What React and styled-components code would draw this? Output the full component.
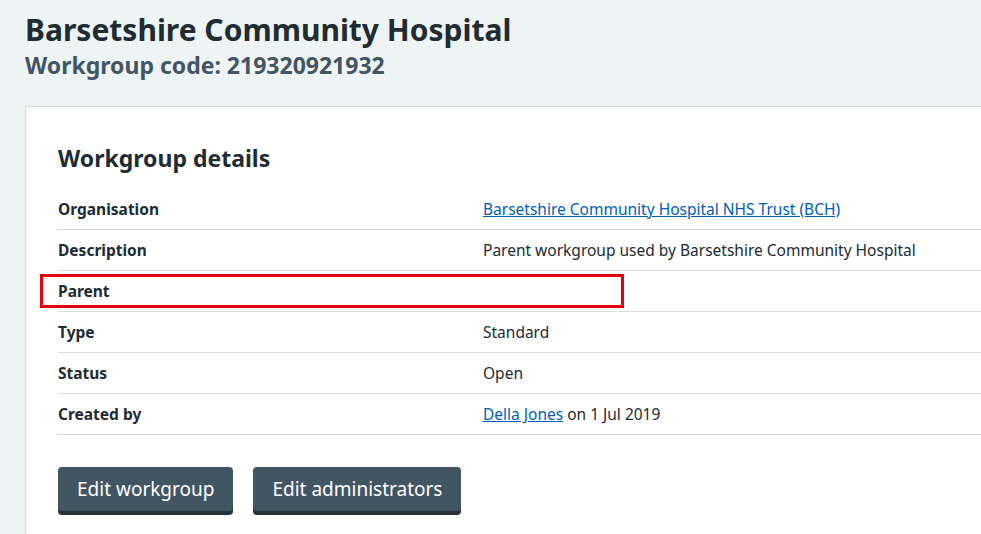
import React from "react";
import styled, { createGlobalStyle } from "styled-components";

const Global = createGlobalStyle`
  html, body { margin: 0; padding: 0; background: #eef3f3; }
  body { font-family: "Noto Sans", "Open Sans", sans-serif; color: #212b32; overflow: hidden; }
`;

const Page = styled.div`
  padding: 11px 0 0 25px;
  width: 1100px;
`;
const Title = styled.h1`
  margin: 0; font-size: 30px; font-weight: 700; line-height: 38px;
`;
const Sub = styled.div`
  font-size: 23px; font-weight: 700; color: #425563; line-height: 32px; margin-top: 0;
`;
const Card = styled.div`
  margin-top: 25px; background: #fff; border: 1px solid #d8dde0;
  padding: 33px 32px 40px 32px;
`;
const H2 = styled.h2`
  margin: 0 0 13px; font-size: 23px; font-weight: 700; line-height: 36px;
`;
const Row = styled.div`
  position: relative;
  display: grid; grid-template-columns: 425px 1fr;
  height: 40px; align-items: center; border-bottom: 1px solid #d8dde0;
  font-size: 15.5px;
`;
const Key = styled.div` font-weight: 700; `;
const Val = styled.div``;
const Link = styled.a` color: #005eb8; text-decoration: underline; `;
const Highlight = styled.div`
  position: absolute; left: -18px; top: 3px; width: 578px; height: 28px;
  border: 3px solid #e8000b;
`;
const Buttons = styled.div` display: flex; gap: 20px; margin-top: 32px; `;
const Button = styled.button`
  font-family: inherit; font-size: 19px; color: #fff; background: #425563;
  border: 0; border-radius: 4px; box-shadow: 0 4px 0 #263139;
  height: 44px; padding: 0 19px; cursor: pointer;
`;

const rows = [
  ["Organisation", <Link href="#">Barsetshire Community Hospital NHS Trust (BCH)</Link>],
  ["Description", "Parent workgroup used by Barsetshire Community Hospital"],
  ["Parent", "", true],
  ["Type", "Standard"],
  ["Status", "Open"],
  ["Created by", <><Link href="#">Della Jones</Link> on 1 Jul 2019</>],
];

export default function App() {
  return (
    <Page>
      <Global />
      <Title>Barsetshire Community Hospital</Title>
      <Sub>Workgroup code: 219320921932</Sub>
      <Card>
        <H2>Workgroup details</H2>
        {rows.map(([k, v, hl]) => (
          <Row key={k}>
            {hl && <Highlight />}
            <Key>{k}</Key>
            <Val>{v}</Val>
          </Row>
        ))}
        <Buttons>
          <Button>Edit workgroup</Button>
          <Button>Edit administrators</Button>
        </Buttons>
      </Card>
    </Page>
  );
}
